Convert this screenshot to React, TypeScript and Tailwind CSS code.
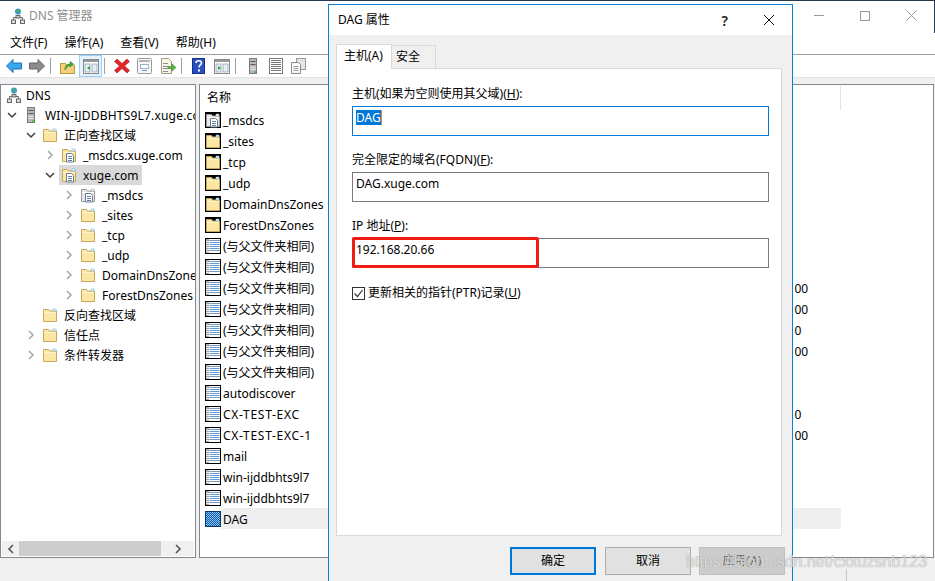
import React from "react";

const Folder = ({ black = false, gray = false, doc = false }: { black?: boolean; gray?: boolean; doc?: boolean }) => (
  <svg width="16" height="16" viewBox="0 0 16 16" className="shrink-0">
    {black && <rect width="16" height="16" fill="#000" />}
    <path d="M1.500 2.500h5l1 1.500h7v10.500h-13z" fill={gray ? "#e8e8e8" : "#fce6a4"} stroke={gray ? "#9a9a9a" : "#c8a85a"} />
    <path d="M2 5.500h12" stroke={gray ? "#fff" : "#fff4d0"} />
    <path d="M11 2h3v2h-3z" fill="#fff" stroke={gray ? "#aaa" : "#6db3e8"} strokeWidth=".6" />
    {doc && (
      <g>
        <path d="M5.500 6.500h5l2 2v6.500h-7z" fill="#fff" stroke="#6d7a8a" />
        <path d="M7 9.500h4M7 11.500h4M7 13.500h4" stroke="#5a7fa8" />
      </g>
    )}
  </svg>
);

const RecordIcon = () => (
  <svg width="16" height="16" viewBox="0 0 16 16" className="shrink-0">
    <rect width="16" height="16" fill="#000" />
    <rect x="1" y="1" width="14" height="14" fill="#fff" />
    <rect x="1" y="1" width="3" height="14" fill="#a9a9a9" />
    <path d="M4 2.500h11M4 12.500h11" stroke="#7d99bb" />
    <path d="M4.500 4.500h10M4.500 6.500h10M4.500 8.500h10M4.500 10.500h10" stroke="#5d9ad6" />
    <path d="M1 3.500h3M1 5.500h3M1 7.500h3M1 9.500h3M1 11.500h3M1 13.500h3" stroke="#e8e8e8" />
  </svg>
);

const DagIcon = () => (
  <svg width="16" height="16" viewBox="0 0 16 16" className="shrink-0">
    <defs>
      <pattern id="dither" width="2" height="2" patternUnits="userSpaceOnUse">
        <rect width="2" height="2" fill="#0a5fb0" />
        <rect width="1" height="1" fill="#7fb6e8" />
        <rect x="1" y="1" width="1" height="1" fill="#9cc8ee" />
      </pattern>
    </defs>
    <rect width="16" height="16" fill="#03396e" />
    <rect x="1" y="1" width="14" height="14" fill="url(#dither)" />
  </svg>
);

const DnsIcon = () => (
  <svg width="14" height="16" viewBox="0 0 14 16" className="shrink-0">
    <circle cx="7" cy="3.500" r="3" fill="#3d9bd6" />
    <path d="M5 2.500c1-1 2-1 3 0l-1 2H5.500z" fill="#4fae3c" />
    <path d="M7 6.500v3M2.500 12V9.500h9V12" fill="none" stroke="#666" />
    <rect x="0.500" y="12" width="4" height="3.500" fill="#ddd" stroke="#666" />
    <rect x="9.500" y="12" width="4" height="3.500" fill="#ddd" stroke="#666" />
    <rect x="5" y="7.500" width="4" height="2.500" fill="#ccc" stroke="#666" />
  </svg>
);

const ServerIcon = () => (
  <svg width="10" height="16" viewBox="0 0 10 16" className="shrink-0">
    <rect x="1.500" y="0.500" width="7" height="15" fill="#b9b9b9" stroke="#7a7a7a" />
    <path d="M2.500 3.500h5M2.500 6.500h5" stroke="#555" />
    <path d="M2.500 9.500h5M2.500 11.500h5" stroke="#e6e6e6" />
    <rect x="6" y="13" width="2" height="2" fill="#4fc24f" />
  </svg>
);

const Chevron = ({ open = false, hidden = false }: { open?: boolean; hidden?: boolean }) => (
  <svg width="10" height="10" viewBox="0 0 10 10" className={hidden ? "invisible shrink-0" : "shrink-0"}>
    {open ? (
      <path d="M1 3l4 4 4-4" fill="none" stroke="#404040" strokeWidth="1.500" />
    ) : (
      <path d="M3 1l4 4-4 4" fill="none" stroke="#a6a6a6" strokeWidth="1.500" />
    )}
  </svg>
);

type TreeRow = {
  level: number;
  text: string;
  icon: React.ReactNode;
  open?: boolean;
  noChev?: boolean;
  selected?: boolean;
};

const tree: TreeRow[] = [
  { level: 1, text: "WIN-IJDDBHTS9L7.xuge.com", icon: <ServerIcon />, open: true },
  { level: 2, text: "正向查找区域", icon: <Folder />, open: true },
  { level: 3, text: "_msdcs.xuge.com", icon: <Folder doc /> },
  { level: 3, text: "xuge.com", icon: <Folder doc />, open: true, selected: true },
  { level: 4, text: "_msdcs", icon: <Folder gray doc /> },
  { level: 4, text: "_sites", icon: <Folder /> },
  { level: 4, text: "_tcp", icon: <Folder /> },
  { level: 4, text: "_udp", icon: <Folder /> },
  { level: 4, text: "DomainDnsZones", icon: <Folder /> },
  { level: 4, text: "ForestDnsZones", icon: <Folder /> },
  { level: 2, text: "反向查找区域", icon: <Folder />, noChev: true },
  { level: 2, text: "信任点", icon: <Folder /> },
  { level: 2, text: "条件转发器", icon: <Folder /> },
];

const same = "(与父文件夹相同)";
const list: { name: string; icon: React.ReactNode; value?: string; sel?: boolean; wide?: boolean }[] = [
  { name: "_msdcs", icon: <Folder black gray doc /> },
  { name: "_sites", icon: <Folder black /> },
  { name: "_tcp", icon: <Folder black /> },
  { name: "_udp", icon: <Folder black /> },
  { name: "DomainDnsZones", icon: <Folder black /> },
  { name: "ForestDnsZones", icon: <Folder black /> },
  { name: same, icon: <RecordIcon /> },
  { name: same, icon: <RecordIcon /> },
  { name: same, icon: <RecordIcon />, value: "192.168.20.100" },
  { name: same, icon: <RecordIcon />, value: "192.168.20.100" },
  { name: same, icon: <RecordIcon />, value: "192.168.20.10" },
  { name: same, icon: <RecordIcon />, value: "192.168.20.100" },
  { name: same, icon: <RecordIcon /> },
  { name: "autodiscover", icon: <RecordIcon /> },
  { name: "CX-TEST-EXC", icon: <RecordIcon />, value: "192.168.20.10", wide: true },
  { name: "CX-TEST-EXC-1", icon: <RecordIcon />, value: "192.168.20.100", wide: true },
  { name: "mail", icon: <RecordIcon /> },
  { name: "win-ijddbhts9l7", icon: <RecordIcon /> },
  { name: "win-ijddbhts9l7", icon: <RecordIcon /> },
  { name: "DAG", icon: <DagIcon />, sel: true },
];

const Sep = () => (
  <div className="w-2 h-[22px] pl-[2px] py-[3px] shrink-0">
    <div className="w-px h-full bg-[#a0a0a0]" />
  </div>
);

const Tool = ({ children, active = false }: { children: React.ReactNode; active?: boolean }) => (
  <div
    className={
      active
        ? "w-[23px] h-[22px] shrink-0 flex items-center justify-center bg-[#e5f3ff] border border-[#99d1ff]"
        : "w-[23px] h-[22px] shrink-0 flex items-center justify-center"
    }
  >
    {children}
  </div>
);

const PanelGlyph = ({ color, left }: { color: string; left: boolean }) => (
  <svg width="16" height="15" viewBox="0 0 16 15">
    <rect x="0.500" y="0.500" width="15" height="14" fill="#fff" stroke="#8a8a8a" />
    <rect x="1" y="1" width="14" height="2" fill="#9a9a9a" />
    <rect x="2" y="5" width="5" height="8" fill="#e6eef6" stroke="#7a8a9a" strokeWidth=".6" />
    <rect x="9" y="5" width="5" height="8" fill="#e6eef6" stroke="#7a8a9a" strokeWidth=".6" />
    <path d={left ? "M7 7v4l-3-2z" : "M4 7v4l3-2z"} fill={color} />
  </svg>
);

const Toolbar = () => (
  <div className="h-[22px] flex pl-[2px] bg-white">
    <Tool>
      <svg width="16" height="14" viewBox="0 0 16 14">
        <path d="M0.500 7L7 0.500V4h8.500v6H7v3.500z" fill="#3aa6ee" stroke="#1f74b8" />
      </svg>
    </Tool>
    <Tool>
      <svg width="16" height="14" viewBox="0 0 16 14">
        <path d="M15.500 7L9 0.500V4H0.500v6H9v3.500z" fill="#8c8c8c" stroke="#666" />
      </svg>
    </Tool>
    <Sep />
    <Tool>
      <svg width="15" height="16" viewBox="0 0 15 16">
        <path d="M0.500 5.500h5l1 1.500h8v8.500H.5z" fill="#f5d27a" stroke="#b8953f" />
        <path d="M5 12c0-4 2-6 5-6V3.500L13.500 6 10 9V7.500c-2 0-3 1.500-5 4.500z" fill="#3fae3f" stroke="#2a7f2a" strokeWidth=".6" />
      </svg>
    </Tool>
    <Tool active>
      <PanelGlyph color="#3aa03a" left />
    </Tool>
    <Sep />
    <Tool>
      <svg width="16" height="16" viewBox="0 0 16 16">
        <path d="M3 1l5 4.500L13 1l2.500 2.500L10.500 8l5 4.500L13 15l-5-4.500L3 15 .5 12.500 5.500 8l-5-4.500z" fill="#e0262b" stroke="#b01a1a" strokeWidth=".6" />
      </svg>
    </Tool>
    <Tool>
      <svg width="15" height="16" viewBox="0 0 15 16">
        <rect x="0.500" y="0.500" width="14" height="15" rx="1" fill="#f8f8f8" stroke="#9a9a9a" />
        <rect x="2" y="2" width="11" height="2" fill="#b5b5b5" />
        <rect x="3.500" y="6.500" width="8" height="4" fill="#fff" stroke="#a0b4c8" />
        <path d="M5 12.500h5" stroke="#5d9ad6" />
      </svg>
    </Tool>
    <Tool>
      <svg width="16" height="16" viewBox="0 0 16 16">
        <path d="M1.500 .5h7l3 3v12h-10z" fill="#fbf6e4" stroke="#a09a88" />
        <path d="M3 5.500h5M3 8.500h5M3 10.500h5M3 13.500h5" stroke="#8c8c8c" />
        <path d="M8 8.500h4V6l4 3.500-4 3.500v-2.500H8z" fill="#56b848" stroke="#3a8a30" strokeWidth=".6" />
      </svg>
    </Tool>
    <Sep />
    <Tool>
      <svg width="13" height="16" viewBox="0 0 13 16">
        <rect width="13" height="16" fill="#1f3f9e" />
        <rect x="0.500" y="0.500" width="12" height="15" fill="#2a50c0" stroke="#163088" />
        <path d="M4 5c0-3 5.500-3 5.500 0 0 2-2.500 2-2.500 4.500" fill="none" stroke="#fff" strokeWidth="1.600" />
        <rect x="6" y="11.500" width="2" height="2" fill="#fff" />
      </svg>
    </Tool>
    <Tool>
      <PanelGlyph color="#3aa03a" left={false} />
    </Tool>
    <Sep />
    <Tool>
      <ServerIcon />
    </Tool>
    <Tool>
      <svg width="14" height="16" viewBox="0 0 14 16">
        <rect x="0.500" y="0.500" width="13" height="15" fill="#fff" stroke="#7a7a7a" />
        <path d="M2 2.500h10M2 4.500h10M2 6.500h10M2 8.500h10M2 10.500h10M2 12.500h10" stroke="#7a7a7a" />
      </svg>
    </Tool>
    <Tool>
      <svg width="15" height="16" viewBox="0 0 15 16">
        <rect x="5.500" y="0.500" width="9" height="11" fill="#e4e4e4" stroke="#9a9a9a" />
        <path d="M.5 4.500h7l2 2v9h-9z" fill="#fafafa" stroke="#8a8a8a" />
        <path d="M2.500 8.500h5M2.500 10.500h5M2.500 12.500h5" stroke="#9a9a9a" />
      </svg>
    </Tool>
  </div>
);

const Tree = () => (
  <div className="w-[196px] h-full shrink-0 border-x border-y border-[#828790] bg-white flex flex-col overflow-hidden">
    <div className="h-5 flex items-center pl-[6px] shrink-0">
      <DnsIcon />
      <span className="ml-[5px] pt-[2px]">DNS</span>
    </div>
    {tree.map((r, i) => (
      <div key={i} className="h-5 flex items-center shrink-0 whitespace-nowrap">
        {r.level === 1 && <div className="w-[6px] shrink-0" />}
        {r.level === 2 && <div className="w-[25px] shrink-0" />}
        {r.level === 3 && <div className="w-[44px] shrink-0" />}
        {r.level === 4 && <div className="w-[63px] shrink-0" />}
        <Chevron open={r.open} hidden={r.noChev} />
        {r.level === 1 ? (
          <>
            <div className="w-[9px] shrink-0" />
            <ServerIcon />
            <div className="w-[9px] shrink-0" />
            <span className="pt-[2px] tracking-[0.2px]">{r.text}</span>
          </>
        ) : (
          <div className={r.selected ? "ml-[4px] pl-[2px] pr-[4px] h-5 flex items-center bg-[#d9d9d9]" : "ml-[4px] pl-[2px] pr-[4px] h-5 flex items-center"}>
            {r.icon}
            <span className="pl-[6px] pt-[2px]">{r.text}</span>
          </div>
        )}
      </div>
    ))}
    <div className="flex-1" />
    <div className="h-[15px] mb-px mx-px bg-[#f0f0f0] flex items-center shrink-0">
      <div className="w-[17px] flex justify-center">
        <svg width="8" height="10" viewBox="0 0 8 10">
          <path d="M6 1L2 5l4 4" fill="none" stroke="#555" strokeWidth="1.600" />
        </svg>
      </div>
      <div className="w-[142px] h-full bg-[#cdcdcd]" />
      <div className="flex-1 flex justify-center">
        <svg width="8" height="10" viewBox="0 0 8 10">
          <path d="M2 1l4 4-4 4" fill="none" stroke="#555" strokeWidth="1.600" />
        </svg>
      </div>
    </div>
  </div>
);

const List = () => (
  <div className="ml-[3px] w-[735px] h-full shrink-0 border border-[#828790] bg-white overflow-hidden relative">
    <div className="h-6 flex shrink-0">
      <div className="w-[640px] pl-[7px] pt-[5px] leading-4">名称</div>
      <div className="w-px h-6 mt-px bg-[#e5e5e5]" />
    </div>
    {list.map((r, i) => (
      <div key={i} className="h-[21px] pl-[5px] flex items-center whitespace-nowrap">
        {r.icon}
        <div className={r.sel ? "w-[620px] h-full flex items-center pl-[2px] pt-[2px] bg-[#efefef]" : "w-[620px] h-full flex items-center pl-[2px] pt-[2px]"}>
          <div className={r.wide ? "w-[500px] shrink-0 tracking-[0.7px]" : "w-[500px] shrink-0"}>{r.name}</div>
          {r.value && <div>{r.value}</div>}
        </div>
      </div>
    ))}
  </div>
);

const Label = ({ text, k, tail = "):" }: { text: string; k: string; tail?: string }) => (
  <div className="h-4 leading-4 whitespace-nowrap">
    {text}
    <u>{k}</u>
    {tail}
  </div>
);

const Dialog = () => (
  <div className="absolute left-[328px] top-[3px] w-[465px] h-[577px] border-x border-t border-[#0b82dd] flex flex-col bg-[#f0f0f0]">
    <div className="h-[30px] shrink-0 bg-white flex items-center pl-[9px]">
      <span>DAG 属性</span>
      <span className="ml-auto mr-[35px] text-[14px] font-semibold text-[#222]">?</span>
      <svg width="12" height="12" viewBox="0 0 12 12" className="mr-[17px]">
        <path d="M1 1l10 10M11 1L1 11" stroke="#111" strokeWidth="1" />
      </svg>
    </div>
    <div className="flex pl-[7px] pt-[9px] h-[33px] shrink-0 items-end">
      <div className="w-[56px] h-[25px] bg-white border-x border-t border-[#d9d9d9] pl-[7px] pt-[3px] leading-4 z-10 -mb-px pb-px">主机(A)</div>
      <div className="w-[44px] h-[23px] bg-[#f0f0f0] border-r border-t border-[#d9d9d9] pl-[4px] pt-[3px] leading-4">安全</div>
    </div>
    <div className="ml-[7px] w-[446px] h-[468px] shrink-0 bg-white border border-[#d9d9d9] px-[15px] pt-[17px]">
      <Label text="主机(如果为空则使用其父域)(" k="H" />
      <div className="mt-1 w-[417px] h-[30px] border border-[#0078d7] px-[3px] pt-[3px] leading-4">
        <span className="inline-block h-[15px] leading-[15px] bg-[#0078d7] text-white border-r border-[#f08030]">DAG</span>
      </div>
      <div className="mt-4">
        <Label text="完全限定的域名(FQDN)(" k="F" />
      </div>
      <div className="mt-1 w-[417px] h-[30px] border border-[#7a7a7a] px-[3px] pt-[3px] leading-4">DAG.xuge.com</div>
      <div className="mt-4">
        <Label text="IP 地址(" k="P" />
      </div>
      <div className="mt-1 w-[417px] h-[30px] border border-[#7a7a7a] px-[3px] pt-[3px] leading-4 relative">
        192.168.20.66
        <div className="absolute -left-px -top-[2px] w-[187px] h-[31px] border-[3px] border-[#f01c14] rounded-[2px]" />
      </div>
      <div className="mt-[17px] flex items-center h-4">
        <div className="w-[13px] h-[13px] border border-[#333] shrink-0 flex items-center justify-center">
          <svg width="11" height="11" viewBox="0 0 11 11">
            <path d="M1.500 5.500l3 3 5-6.500" fill="none" stroke="#333" strokeWidth="1.200" />
          </svg>
        </div>
        <div className="ml-[3px] whitespace-nowrap">
          更新相关的指针(PTR)记录(<u>U</u>)
        </div>
      </div>
    </div>
    <div className="flex mt-[11px] pr-[7px] justify-end gap-[9px] h-[28px] shrink-0">
      <div className="w-[86px] h-[28px] bg-[#e1e1e1] border-2 border-[#0078d7] flex items-center justify-center">确定</div>
      <div className="w-[86px] h-[28px] bg-[#e1e1e1] border border-[#adadad] flex items-center justify-center">取消</div>
      <div className="w-[86px] h-[28px] -ml-px bg-[#cccccc] border border-[#bfbfbf] flex items-center justify-center text-[#6d6d6d]">
        应用(A)
      </div>
    </div>
  </div>
);

export default function App() {
  return (
    <div className="relative w-[935px] h-[581px] overflow-hidden bg-white text-[12px] text-black font-['Noto_Sans','Noto_Sans_CJK_SC',sans-serif] flex flex-col border-t border-[#2b3a4a]">
      <div className="h-[32px] shrink-0 flex items-center pl-[11px] pb-[3px] border-r border-[#2b3a4a]">
        <DnsIcon />
        <span className="ml-[4px] text-[#8f8f8f]">DNS 管理器</span>
        <div className="ml-auto flex">
          <div className="w-[46px] h-[28px] flex items-center justify-center">
            <div className="w-[10px] h-px bg-[#999]" />
          </div>
          <div className="w-[46px] h-[28px] flex items-center justify-center">
            <div className="w-[10px] h-[10px] border border-[#999]" />
          </div>
          <div className="w-[46px] h-[28px] flex items-center justify-center">
            <svg width="11" height="11" viewBox="0 0 11 11">
              <path d="M.5 .5l10 10M10.500 .5l-10 10" stroke="#999" />
            </svg>
          </div>
        </div>
      </div>
      <div className="h-[22px] shrink-0 flex items-center pl-[10px] gap-[17px] border-b border-[#a0a0a0] pb-px">
        <span>文件(F)</span>
        <span>操作(A)</span>
        <span>查看(V)</span>
        <span>帮助(H)</span>
      </div>
      <Toolbar />
      <div className="h-[7px] shrink-0 bg-[#f0f0f0] border-t border-[#e3e3e3]" />
      <div className="h-[474px] shrink-0 flex bg-[#f0f0f0]">
        <Tree />
        <List />
      </div>
      <div className="flex-1 bg-[#f0f0f0] flex">
        <div className="ml-[846px] w-px bg-[#c8c8c8] mt-[11px]" />
      </div>
      <Dialog />
      <div className="absolute left-[686px] top-[551px] text-[16px] leading-5 whitespace-nowrap text-white/70 font-['Liberation_Sans',sans-serif] [text-shadow:0_0_1px_rgba(90,90,90,0.7)]">
        https://blog.csdn.net/cxxuzsnb123
      </div>
    </div>
  );
}
